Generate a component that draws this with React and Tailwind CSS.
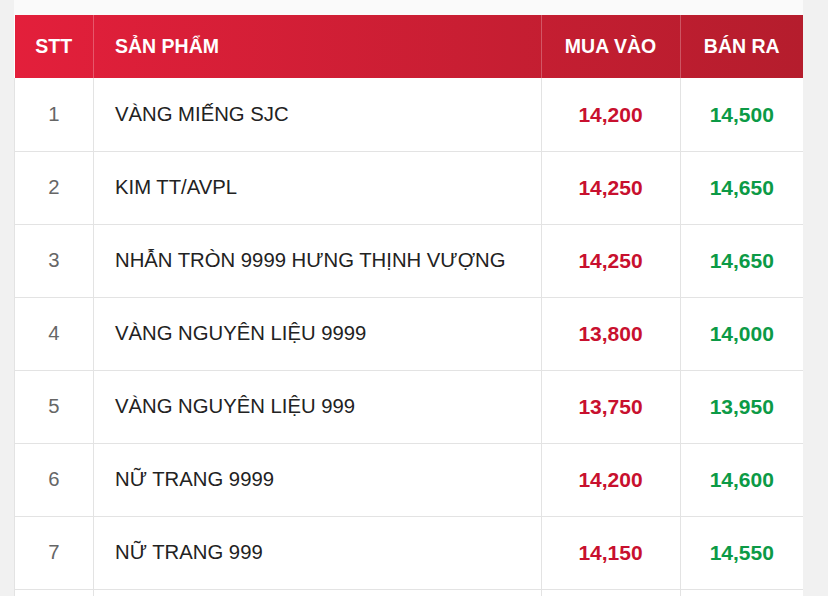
import React from "react";

const rows = [
    { id: 1, name: "VÀNG MIẾNG SJC", buy: "14,200", sell: "14,500" },
    { id: 2, name: "KIM TT/AVPL", buy: "14,250", sell: "14,650" },
    { id: 3, name: "NHẪN TRÒN 9999 HƯNG THỊNH VƯỢNG", buy: "14,250", sell: "14,650" },
    { id: 4, name: "VÀNG NGUYÊN LIỆU 9999", buy: "13,800", sell: "14,000" },
    { id: 5, name: "VÀNG NGUYÊN LIỆU 999", buy: "13,750", sell: "13,950" },
    { id: 6, name: "NỮ TRANG 9999", buy: "14,200", sell: "14,600" },
    { id: 7, name: "NỮ TRANG 999", buy: "14,150", sell: "14,550" },
    { id: 8, name: "NỮ TRANG 98", buy: "13,900", sell: "14,300" },
];

const App = () => {
    return (
        <div
            className="min-h-screen bg-[#f1f1f1] h-[596px] overflow-hidden"
            style={{ fontFamily: '"Liberation Sans", Arial, sans-serif' }}
        >
            <div className="ml-[14px] w-[789px] bg-[#fafafa] pt-[15px]">
                <table className="w-full border-collapse bg-white">
                    {/* Header */}
                    <thead>
                        <tr className="h-[63px] bg-gradient-to-r from-[#e31f3b] to-[#b51d2d] text-white text-[19.5px] font-bold">
                            <th className="w-[79px] text-center border-r border-white/25">STT</th>
                            <th className="text-left pl-[21px] border-r border-white/25">SẢN PHẨM</th>
                            <th className="w-[139px] text-center border-r border-white/25">MUA VÀO</th>
                            <th className="w-[123px] text-center">BÁN RA</th>
                        </tr>
                    </thead>

                    {/* Rows */}
                    <tbody>
                        {rows.map((row) => (
                            <tr key={row.id} className="h-[73px] border-b border-[#e3e3e3] text-[20.3px]">
                                <td className="text-center text-[#666] border-l border-r border-[#e3e3e3]">{row.id}</td>
                                <td className="pl-[21px] text-[#222] border-r border-[#e3e3e3]">{row.name}</td>
                                <td className="text-center text-[21px] font-bold text-[#c8102e] border-r border-[#e3e3e3]">{row.buy}</td>
                                <td className="text-center text-[21px] font-bold text-[#0c9a46]">{row.sell}</td>
                            </tr>
                        ))}
                    </tbody>
                </table>
            </div>
        </div>
    );
};

export default App;
